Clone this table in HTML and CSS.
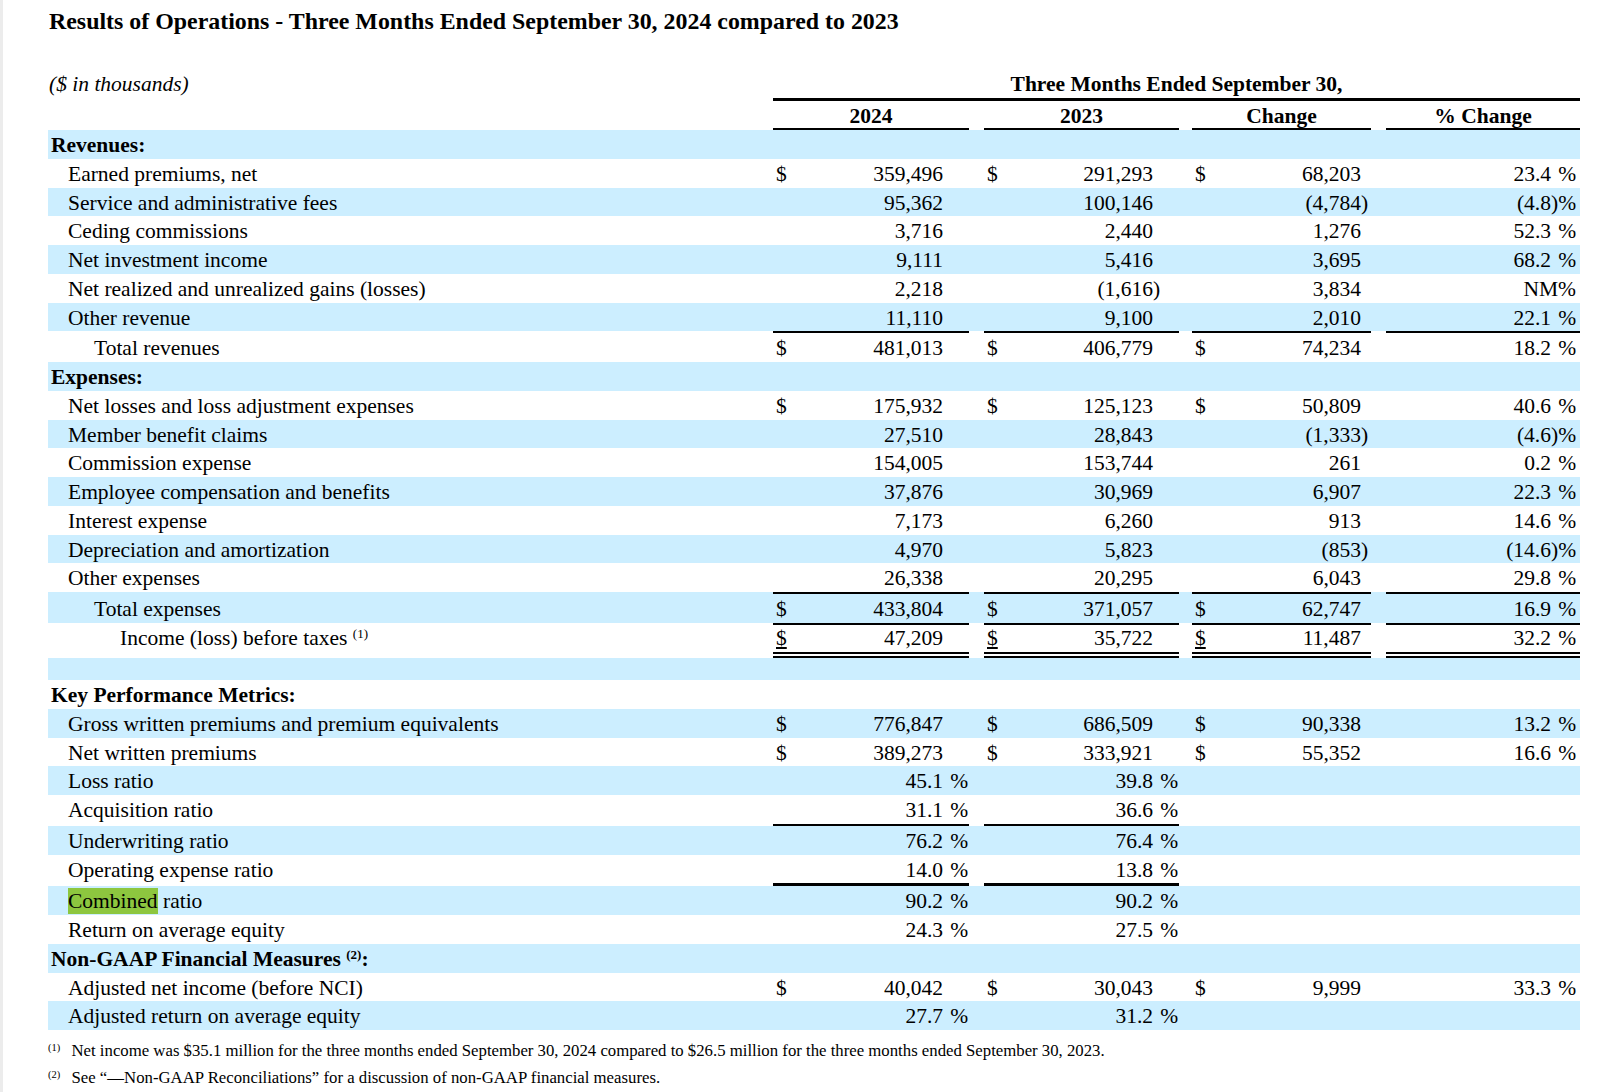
FILE: index.html
```html
<!DOCTYPE html>
<html lang="en">
<head>
<meta charset="utf-8">
<title>Results of Operations</title>
<link rel="stylesheet" href="styles.css">
</head>
<body>
<div class="page">
<h1 class="title">Results of Operations - Three Months Ended September 30, 2024 compared to 2023</h1>
<table class="ops">
<colgroup>
<col class="w-lbl">
<col class="w-cur"><col class="w-n1"><col class="w-sx"><col class="w-g1">
<col class="w-cur"><col class="w-n2"><col class="w-sx"><col class="w-g2">
<col class="w-cur"><col class="w-n2"><col class="w-sx3"><col class="w-g1">
<col class="w-cur"><col class="w-n4"><col class="w-sx4">
</colgroup>
<tr class="hd1"><td class="lbl units">($ in thousands)</td><td class="period" colspan="15">Three Months Ended September 30,</td></tr>
<tr class="hd2"><td class="lbl"></td><td class="yr" colspan="3">2024</td><td class="gap"></td><td class="yr" colspan="3">2023</td><td class="gap"></td><td class="yr" colspan="3">Change</td><td class="gap"></td><td class="yr" colspan="3">% Change</td></tr>

<tr class="s"><td class="lbl sec" colspan="16">Revenues:</td></tr>
<tr><td class="lbl it">Earned premiums, net</td><td class="cur">$</td><td class="num">359,496</td><td class="sfx"></td><td class="gap"></td><td class="cur">$</td><td class="num">291,293</td><td class="sfx"></td><td class="gap"></td><td class="cur">$</td><td class="num">68,203</td><td class="sfx"></td><td class="gap"></td><td class="cur"></td><td class="num">23.4</td><td class="sfx"><span class="gh">)</span>%</td></tr>
<tr class="s"><td class="lbl it">Service and administrative fees</td><td class="cur"></td><td class="num">95,362</td><td class="sfx"></td><td class="gap"></td><td class="cur"></td><td class="num">100,146</td><td class="sfx"></td><td class="gap"></td><td class="cur"></td><td class="num">(4,784</td><td class="sfx">)</td><td class="gap"></td><td class="cur"></td><td class="num">(4.8</td><td class="sfx">)%</td></tr>
<tr><td class="lbl it">Ceding commissions</td><td class="cur"></td><td class="num">3,716</td><td class="sfx"></td><td class="gap"></td><td class="cur"></td><td class="num">2,440</td><td class="sfx"></td><td class="gap"></td><td class="cur"></td><td class="num">1,276</td><td class="sfx"></td><td class="gap"></td><td class="cur"></td><td class="num">52.3</td><td class="sfx"><span class="gh">)</span>%</td></tr>
<tr class="s"><td class="lbl it">Net investment income</td><td class="cur"></td><td class="num">9,111</td><td class="sfx"></td><td class="gap"></td><td class="cur"></td><td class="num">5,416</td><td class="sfx"></td><td class="gap"></td><td class="cur"></td><td class="num">3,695</td><td class="sfx"></td><td class="gap"></td><td class="cur"></td><td class="num">68.2</td><td class="sfx"><span class="gh">)</span>%</td></tr>
<tr><td class="lbl it">Net realized and unrealized gains (losses)</td><td class="cur"></td><td class="num">2,218</td><td class="sfx"></td><td class="gap"></td><td class="cur"></td><td class="num">(1,616</td><td class="sfx">)</td><td class="gap"></td><td class="cur"></td><td class="num">3,834</td><td class="sfx"></td><td class="gap"></td><td class="cur"></td><td class="num nm" colspan="2">NM%</td></tr>
<tr class="s"><td class="lbl it">Other revenue</td><td class="cur"></td><td class="num">11,110</td><td class="sfx"></td><td class="gap"></td><td class="cur"></td><td class="num">9,100</td><td class="sfx"></td><td class="gap"></td><td class="cur"></td><td class="num">2,010</td><td class="sfx"></td><td class="gap"></td><td class="cur"></td><td class="num">22.1</td><td class="sfx"><span class="gh">)</span>%</td></tr>
<tr class="tot"><td class="lbl total">Total revenues</td><td class="cur">$</td><td class="num">481,013</td><td class="sfx"></td><td class="gap"></td><td class="cur">$</td><td class="num">406,779</td><td class="sfx"></td><td class="gap"></td><td class="cur">$</td><td class="num">74,234</td><td class="sfx"></td><td class="gap"></td><td class="cur"></td><td class="num">18.2</td><td class="sfx"><span class="gh">)</span>%</td></tr>

<tr class="s"><td class="lbl sec" colspan="16">Expenses:</td></tr>
<tr><td class="lbl it">Net losses and loss adjustment expenses</td><td class="cur">$</td><td class="num">175,932</td><td class="sfx"></td><td class="gap"></td><td class="cur">$</td><td class="num">125,123</td><td class="sfx"></td><td class="gap"></td><td class="cur">$</td><td class="num">50,809</td><td class="sfx"></td><td class="gap"></td><td class="cur"></td><td class="num">40.6</td><td class="sfx"><span class="gh">)</span>%</td></tr>
<tr class="s"><td class="lbl it">Member benefit claims</td><td class="cur"></td><td class="num">27,510</td><td class="sfx"></td><td class="gap"></td><td class="cur"></td><td class="num">28,843</td><td class="sfx"></td><td class="gap"></td><td class="cur"></td><td class="num">(1,333</td><td class="sfx">)</td><td class="gap"></td><td class="cur"></td><td class="num">(4.6</td><td class="sfx">)%</td></tr>
<tr><td class="lbl it">Commission expense</td><td class="cur"></td><td class="num">154,005</td><td class="sfx"></td><td class="gap"></td><td class="cur"></td><td class="num">153,744</td><td class="sfx"></td><td class="gap"></td><td class="cur"></td><td class="num">261</td><td class="sfx"></td><td class="gap"></td><td class="cur"></td><td class="num">0.2</td><td class="sfx"><span class="gh">)</span>%</td></tr>
<tr class="s"><td class="lbl it">Employee compensation and benefits</td><td class="cur"></td><td class="num">37,876</td><td class="sfx"></td><td class="gap"></td><td class="cur"></td><td class="num">30,969</td><td class="sfx"></td><td class="gap"></td><td class="cur"></td><td class="num">6,907</td><td class="sfx"></td><td class="gap"></td><td class="cur"></td><td class="num">22.3</td><td class="sfx"><span class="gh">)</span>%</td></tr>
<tr><td class="lbl it">Interest expense</td><td class="cur"></td><td class="num">7,173</td><td class="sfx"></td><td class="gap"></td><td class="cur"></td><td class="num">6,260</td><td class="sfx"></td><td class="gap"></td><td class="cur"></td><td class="num">913</td><td class="sfx"></td><td class="gap"></td><td class="cur"></td><td class="num">14.6</td><td class="sfx"><span class="gh">)</span>%</td></tr>
<tr class="s"><td class="lbl it">Depreciation and amortization</td><td class="cur"></td><td class="num">4,970</td><td class="sfx"></td><td class="gap"></td><td class="cur"></td><td class="num">5,823</td><td class="sfx"></td><td class="gap"></td><td class="cur"></td><td class="num">(853</td><td class="sfx">)</td><td class="gap"></td><td class="cur"></td><td class="num">(14.6</td><td class="sfx">)%</td></tr>
<tr><td class="lbl it">Other expenses</td><td class="cur"></td><td class="num">26,338</td><td class="sfx"></td><td class="gap"></td><td class="cur"></td><td class="num">20,295</td><td class="sfx"></td><td class="gap"></td><td class="cur"></td><td class="num">6,043</td><td class="sfx"></td><td class="gap"></td><td class="cur"></td><td class="num">29.8</td><td class="sfx"><span class="gh">)</span>%</td></tr>
<tr class="s tot"><td class="lbl total">Total expenses</td><td class="cur">$</td><td class="num">433,804</td><td class="sfx"></td><td class="gap"></td><td class="cur">$</td><td class="num">371,057</td><td class="sfx"></td><td class="gap"></td><td class="cur">$</td><td class="num">62,747</td><td class="sfx"></td><td class="gap"></td><td class="cur"></td><td class="num">16.9</td><td class="sfx"><span class="gh">)</span>%</td></tr>
<tr class="inc"><td class="lbl pre">Income (loss) before taxes <sup class="ref">(1)</sup></td><td class="cur"><span class="ul">$</span></td><td class="num">47,209</td><td class="sfx"></td><td class="gap"></td><td class="cur"><span class="ul">$</span></td><td class="num">35,722</td><td class="sfx"></td><td class="gap"></td><td class="cur"><span class="ul">$</span></td><td class="num">11,487</td><td class="sfx"></td><td class="gap"></td><td class="cur"></td><td class="num">32.2</td><td class="sfx"><span class="gh">)</span>%</td></tr>
<tr class="s blank"><td colspan="16"></td></tr>

<tr><td class="lbl sec" colspan="16">Key Performance Metrics:</td></tr>
<tr class="s"><td class="lbl it">Gross written premiums and premium equivalents</td><td class="cur">$</td><td class="num">776,847</td><td class="sfx"></td><td class="gap"></td><td class="cur">$</td><td class="num">686,509</td><td class="sfx"></td><td class="gap"></td><td class="cur">$</td><td class="num">90,338</td><td class="sfx"></td><td class="gap"></td><td class="cur"></td><td class="num">13.2</td><td class="sfx"><span class="gh">)</span>%</td></tr>
<tr><td class="lbl it">Net written premiums</td><td class="cur">$</td><td class="num">389,273</td><td class="sfx"></td><td class="gap"></td><td class="cur">$</td><td class="num">333,921</td><td class="sfx"></td><td class="gap"></td><td class="cur">$</td><td class="num">55,352</td><td class="sfx"></td><td class="gap"></td><td class="cur"></td><td class="num">16.6</td><td class="sfx"><span class="gh">)</span>%</td></tr>
<tr class="s"><td class="lbl it">Loss ratio</td><td class="cur"></td><td class="num">45.1</td><td class="sfx"><span class="gh">)</span>%</td><td class="gap"></td><td class="cur"></td><td class="num">39.8</td><td class="sfx"><span class="gh">)</span>%</td><td class="gap"></td><td></td><td></td><td></td><td class="gap"></td><td></td><td></td><td></td></tr>
<tr class="sub2"><td class="lbl it">Acquisition ratio</td><td class="cur"></td><td class="num">31.1</td><td class="sfx"><span class="gh">)</span>%</td><td class="gap"></td><td class="cur"></td><td class="num">36.6</td><td class="sfx"><span class="gh">)</span>%</td><td class="gap"></td><td></td><td></td><td></td><td class="gap"></td><td></td><td></td><td></td></tr>
<tr class="s"><td class="lbl it">Underwriting ratio</td><td class="cur"></td><td class="num">76.2</td><td class="sfx"><span class="gh">)</span>%</td><td class="gap"></td><td class="cur"></td><td class="num">76.4</td><td class="sfx"><span class="gh">)</span>%</td><td class="gap"></td><td></td><td></td><td></td><td class="gap"></td><td></td><td></td><td></td></tr>
<tr class="sub3"><td class="lbl it">Operating expense ratio</td><td class="cur"></td><td class="num">14.0</td><td class="sfx"><span class="gh">)</span>%</td><td class="gap"></td><td class="cur"></td><td class="num">13.8</td><td class="sfx"><span class="gh">)</span>%</td><td class="gap"></td><td></td><td></td><td></td><td class="gap"></td><td></td><td></td><td></td></tr>
<tr class="s"><td class="lbl it"><span class="hl">Combined</span> ratio</td><td class="cur"></td><td class="num">90.2</td><td class="sfx"><span class="gh">)</span>%</td><td class="gap"></td><td class="cur"></td><td class="num">90.2</td><td class="sfx"><span class="gh">)</span>%</td><td class="gap"></td><td></td><td></td><td></td><td class="gap"></td><td></td><td></td><td></td></tr>
<tr><td class="lbl it">Return on average equity</td><td class="cur"></td><td class="num">24.3</td><td class="sfx"><span class="gh">)</span>%</td><td class="gap"></td><td class="cur"></td><td class="num">27.5</td><td class="sfx"><span class="gh">)</span>%</td><td class="gap"></td><td></td><td></td><td></td><td class="gap"></td><td></td><td></td><td></td></tr>
<tr class="s"><td class="lbl sec" colspan="16">Non-GAAP Financial Measures <sup class="ref">(2)</sup>:</td></tr>
<tr><td class="lbl it">Adjusted net income (before NCI)</td><td class="cur">$</td><td class="num">40,042</td><td class="sfx"></td><td class="gap"></td><td class="cur">$</td><td class="num">30,043</td><td class="sfx"></td><td class="gap"></td><td class="cur">$</td><td class="num">9,999</td><td class="sfx"></td><td class="gap"></td><td class="cur"></td><td class="num">33.3</td><td class="sfx"><span class="gh">)</span>%</td></tr>
<tr class="s"><td class="lbl it">Adjusted return on average equity</td><td class="cur"></td><td class="num">27.7</td><td class="sfx"><span class="gh">)</span>%</td><td class="gap"></td><td class="cur"></td><td class="num">31.2</td><td class="sfx"><span class="gh">)</span>%</td><td class="gap"></td><td></td><td></td><td></td><td class="gap"></td><td></td><td></td><td></td></tr>
</table>
<div class="notes">
<p class="note"><span class="mk">(1)</span>Net income was $35.1 million for the three months ended September 30, 2024 compared to $26.5 million for the three months ended September 30, 2023.</p>
<p class="note"><span class="mk">(2)</span>See “—Non-GAAP Reconciliations” for a discussion of non-GAAP financial measures.</p>
</div>
</div>
</body>
</html>
```

FILE: styles.css
```css
* { box-sizing: border-box; }
html, body { margin: 0; padding: 0; background: #ffffff; }
body {
  font-family: "Liberation Serif", "Times New Roman", serif;
  color: #000000;
}
.page {
  border-left: 3px solid #ececec;
  padding-left: 45px;
  min-height: 1092px;
}
.title {
  margin: 0;
  padding: 6px 0 0 1px;
  font-size: 23.9px;
  line-height: 30px;
  font-weight: bold;
}
.ops {
  margin-top: 33px;
  border-collapse: separate;
  border-spacing: 0;
  table-layout: fixed;
  width: 1532px;
  font-size: 21.5px;
}
.w-lbl { width: 725px; }
.w-cur { width: 24px; }
.w-n1 { width: 146px; }
.w-n2 { width: 145px; }
.w-n4 { width: 141px; }
.w-sx { width: 26px; }
.w-sx3 { width: 10px; }
.w-sx4 { width: 29px; }
.w-g1 { width: 15px; }
.w-g2 { width: 13px; }

.ops td {
  padding: 3px 0 0 0;
  line-height: 25.75px;
  vertical-align: baseline;
  white-space: nowrap;
}
.ops tr.s { background: #cceeff; }

.hd1 .units { font-style: italic; padding-left: 1px; }
.hd1 .period {
  text-align: center;
  font-weight: bold;
  border-bottom: 3px solid #000;
}
.ops .hd2 td {
  padding-top: 5.5px;
  line-height: 21.75px;
}
.hd2 .yr {
  text-align: center;
  font-weight: bold;
  border-bottom: 2px solid #000;
}

.lbl.sec { font-weight: bold; padding-left: 3px; }
.lbl.it { padding-left: 20px; }
.lbl.total { padding-left: 46px; }
.lbl.pre { padding-left: 72px; }

.ops td.cur { padding-left: 3px; }
.ops td.num { text-align: right; }
.ops td.sfx { text-align: left; }
.ops td.nm { padding-right: 4px; }
.gh { visibility: hidden; }
.ul { text-decoration: underline; }

.ref {
  font-size: 13px;
  line-height: 0;
  vertical-align: 7px;
}

.tot .cur, .tot .num, .tot .sfx { border-top: 2px solid #000; }
.inc .cur, .inc .num, .inc .sfx {
  border-top: 2px solid #000;
  border-bottom: 6px double #000;
}
.ops .inc td { padding-top: 1px; }
.sub2 .cur, .sub2 .num, .sub2 .sfx { border-bottom: 2px solid #000; }
.sub3 .cur, .sub3 .num, .sub3 .sfx { border-bottom: 3px solid #000; }

.ops .blank td { height: 22.5px; padding: 0; line-height: 0; }

.hl {
  background: #8dc63f;
  padding: 1px 0;
}

.notes { margin-top: 6.5px; }
.note {
  margin: 0;
  font-size: 16.75px;
  line-height: 27px;
  white-space: nowrap;
}
.mk {
  display: inline-block;
  width: 23.5px;
  font-size: 10.5px;
  vertical-align: 5px;
  line-height: 0;
}
```
